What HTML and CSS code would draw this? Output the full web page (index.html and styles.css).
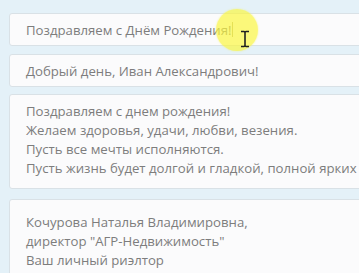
FILE: index.html
```html
<!DOCTYPE html>
<html lang="ru">
<head>
<meta charset="utf-8">
<title>Поздравление</title>
<link rel="stylesheet" href="styles.css">
</head>
<body>
  <div class="form">
    <div class="field field-line field-subject">
      <span class="value">Поздравляем с Днём Рождения!</span><span class="caret"></span>
    </div>
    <div class="field field-line field-greeting">
      <span class="value">Добрый день, Иван Александрович!</span>
    </div>
    <div class="field field-area field-body">
      <p>Поздравляем с днем рождения!</p>
      <p>Желаем здоровья, удачи, любви, везения.</p>
      <p>Пусть все мечты исполняются.</p>
      <p>Пусть жизнь будет долгой и гладкой, полной ярких и запоминающихся событий!</p>
    </div>
    <div class="field field-area field-sign">
      <p>Кочурова Наталья Владимировна,</p>
      <p>директор "АГР-Недвижимость"</p>
      <p>Ваш личный риэлтор</p>
    </div>
  </div>

  <div class="pointer-glow"></div>
  <svg class="pointer-ibeam" width="10" height="18" viewBox="0 0 10 18">
    <path d="M1 1.5 H4 Q5 1.5 5 3 V15 Q5 16.5 4 16.5 H1 M9 1.5 H6 Q5 1.5 5 3 M5 15 Q5 16.5 6 16.5 H9" fill="none" stroke="#222" stroke-width="1.6"/>
  </svg>
</body>
</html>
```

FILE: styles.css
```css
html, body {
  margin: 0;
  height: 100%;
}
body {
  background-color: #e4f1f8;
  font-family: "Open Sans", "Noto Sans", Arial, sans-serif;
  color: #7d7d7d;
  overflow: hidden;
  position: relative;
}
.form {
  padding: 13px 0 0 9px;
  width: 400px;
  display: flex;
  flex-direction: column;
}
.field {
  background-color: #fbfbfc;
  border: 1px solid #d9e1e6;
  border-radius: 3px;
  box-sizing: border-box;
  font-size: 13.2px;
  white-space: nowrap;
}
.field-line {
  height: 33px;
  padding-left: 16px;
  display: flex;
  align-items: center;
}
.field-greeting {
  margin-top: 8px;
}
.field-area {
  padding: 7px 0 0 16px;
}
.field-area p {
  margin: 0;
  line-height: 19px;
}
.field-body {
  margin-top: 7px;
  height: 95px;
}
.field-sign {
  margin-top: 10px;
  height: 90px;
  padding-top: 13px;
}
.caret {
  display: inline-block;
  width: 1px;
  height: 15px;
  margin-left: 1px;
  background-color: #b8b48a;
}
.pointer-glow {
  position: absolute;
  left: 216px;
  top: 9px;
  width: 42px;
  height: 42px;
  border-radius: 50%;
  background-color: rgba(250, 246, 60, 0.68);
  box-shadow: 0 0 2px rgba(250, 246, 60, 0.6);
}
.pointer-ibeam {
  position: absolute;
  left: 240px;
  top: 30px;
}
```
